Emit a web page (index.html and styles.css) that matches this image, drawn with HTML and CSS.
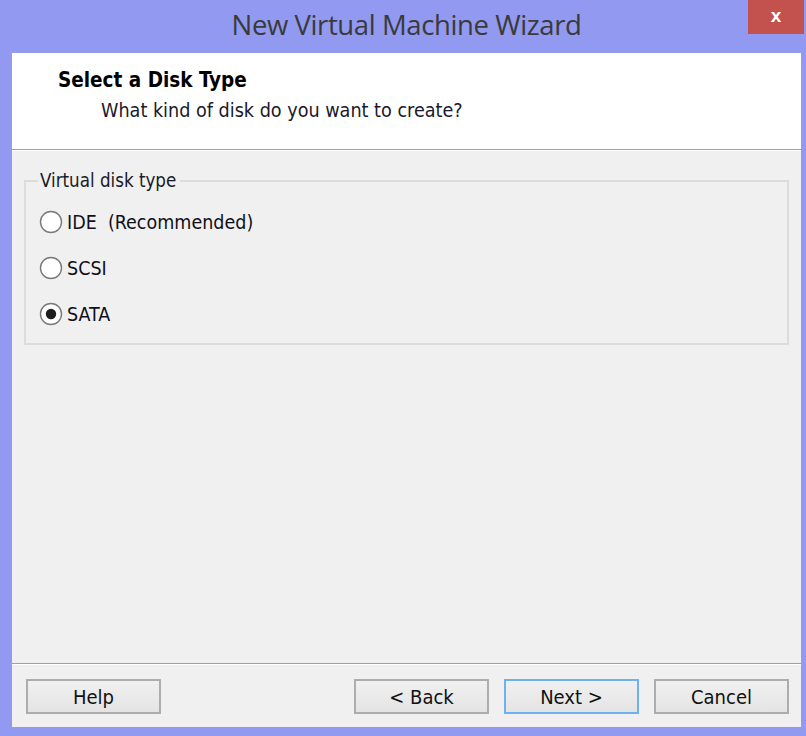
FILE: index.html
```html
<!DOCTYPE html>
<html>
<head>
<meta charset="utf-8">
<link rel="stylesheet" href="styles.css">
</head>
<body>
<div class="window">
  <div class="titlebar">
    <div class="title">New Virtual Machine Wizard</div>
    <div class="close">x</div>
  </div>
  <div class="client">
    <div class="header">
      <div class="heading">Select a Disk Type</div>
      <div class="subheading">What kind of disk do you want to create?</div>
    </div>
    <div class="content">
      <fieldset class="group">
        <legend class="legend">Virtual disk type</legend>
        <div class="radio-row">
          <svg class="radio" width="24" height="24" viewBox="0 0 24 24"><circle cx="12" cy="12" r="10.5" fill="#fff" stroke="#7a7a7a" stroke-width="1.4"/></svg>
          <span class="label">IDE&nbsp;&nbsp;(Recommended)</span>
        </div>
        <div class="radio-row">
          <svg class="radio" width="24" height="24" viewBox="0 0 24 24"><circle cx="12" cy="12" r="10.5" fill="#fff" stroke="#7a7a7a" stroke-width="1.4"/></svg>
          <span class="label">SCSI</span>
        </div>
        <div class="radio-row">
          <svg class="radio" width="24" height="24" viewBox="0 0 24 24"><circle cx="12" cy="12" r="10.5" fill="#fff" stroke="#7a7a7a" stroke-width="1.4"/><circle cx="12" cy="12" r="5.2" fill="#1e1e1e"/></svg>
          <span class="label">SATA</span>
        </div>
      </fieldset>
    </div>
    <div class="footer">
      <button class="btn">Help</button>
      <div class="spacer"></div>
      <button class="btn">&lt; Back</button>
      <button class="btn btn-default">Next &gt;</button>
      <button class="btn">Cancel</button>
    </div>
  </div>
</div>
</body>
</html>
```
FILE: styles.css
```css
html, body {
  margin: 0;
  padding: 0;
}
body {
  width: 806px;
  height: 736px;
  background: #9199f1;
  overflow: hidden;
  font-family: "DejaVu Sans Condensed", "DejaVu Sans", sans-serif;
  font-stretch: condensed;
}
.window {
  display: flex;
  flex-direction: column;
  width: 806px;
  height: 736px;
  box-sizing: border-box;
  padding: 0 5px 9px 12px;
}
.titlebar {
  position: relative;
  height: 53px;
  flex: none;
  display: flex;
  justify-content: center;
}
.title {
  font-family: "Open Sans", sans-serif;
  font-stretch: normal;
  font-size: 27.5px;
  color: #3a3a3a;
  line-height: 50px;
  margin-left: 0;
  letter-spacing: -0.4px;
}
.close {
  position: absolute;
  right: -3px;
  top: 0;
  width: 56px;
  height: 34px;
  background: #c3524e;
  color: #fff;
  font-family: "Liberation Sans", sans-serif;
  font-stretch: normal;
  font-weight: bold;
  font-size: 19px;
  line-height: 32px;
  text-align: center;
}
.client {
  flex: 1;
  display: flex;
  flex-direction: column;
  background: #f0f0f0;
}
.header {
  flex: none;
  height: 97px;
  background: #fff;
  border-bottom: 1px solid #a0a0a0;
  box-shadow: 0 1px 0 #ffffff;
  box-sizing: border-box;
  padding: 15px 0 0 46px;
}
.heading {
  font-weight: bold;
  font-size: 20.5px;
  color: #000;
  line-height: 25px;
}
.subheading {
  font-size: 19.6px;
  color: #1a1a2a;
  line-height: 25px;
  margin-top: 5px;
  padding-left: 43px;
}
.content {
  flex: 1;
  padding: 20px 12px 0 12px;
}
.group {
  margin: 0;
  padding: 7px 0 12px 13px;
  border: 2px solid #dcdcdc;
  height: 175px;
  box-sizing: border-box;
}
.legend {
  padding: 0 4px 0 2px;
  margin-left: -1px;
  font-size: 18.6px;
  color: #1a1a2a;
  line-height: 22px;
}
.radio-row {
  display: flex;
  align-items: center;
  height: 46px;
}
.radio {
  flex: none;
  margin-right: 4px;
}
.label {
  font-size: 19.5px;
  color: #10101a;
}
.footer {
  flex: none;
  height: 64px;
  border-top: 1px solid #a0a0a0;
  box-shadow: inset 0 1px 0 #ffffff;
  box-sizing: border-box;
  display: flex;
  align-items: flex-start;
  padding: 15px 12px 0 14px;
  gap: 15px;
}
.spacer {
  flex: 1;
}
.btn {
  width: 135px;
  height: 35px;
  border: 2px solid #adadad;
  background: linear-gradient(#f0f0f0, #e4e4e4);
  font-family: "DejaVu Sans Condensed", "DejaVu Sans", sans-serif;
  font-stretch: condensed;
  font-size: 20px;
  color: #111;
  padding: 0;
  margin: 0;
}
.btn-default {
  border-color: #6fb0ee;
}
```
